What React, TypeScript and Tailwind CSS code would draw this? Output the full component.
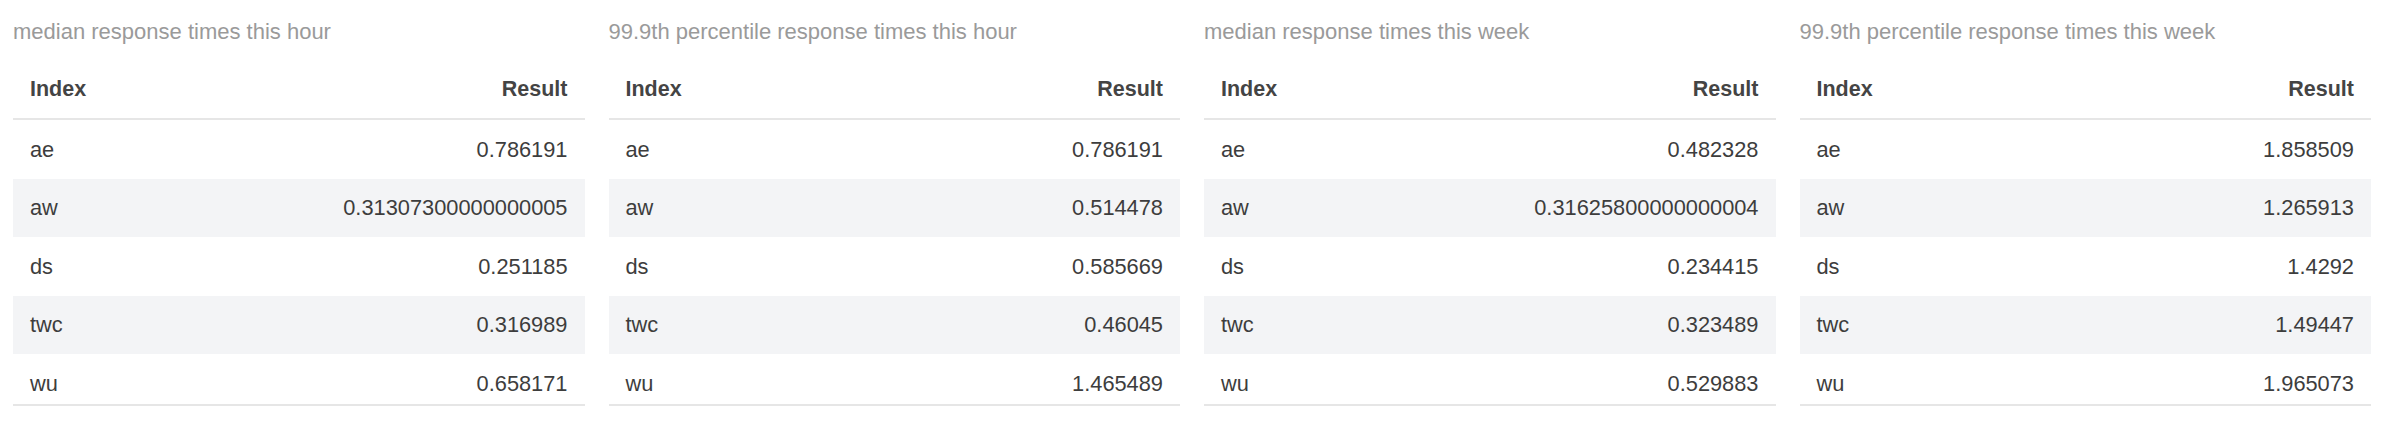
import React from "react";

type Row = [string, string];
type Table = { title: string; rows: Row[] };

const tables: Table[] = [
  {
    title: "median response times this hour",
    rows: [
      ["ae", "0.786191"],
      ["aw", "0.31307300000000005"],
      ["ds", "0.251185"],
      ["twc", "0.316989"],
      ["wu", "0.658171"],
    ],
  },
  {
    title: "99.9th percentile response times this hour",
    rows: [
      ["ae", "0.786191"],
      ["aw", "0.514478"],
      ["ds", "0.585669"],
      ["twc", "0.46045"],
      ["wu", "1.465489"],
    ],
  },
  {
    title: "median response times this week",
    rows: [
      ["ae", "0.482328"],
      ["aw", "0.31625800000000004"],
      ["ds", "0.234415"],
      ["twc", "0.323489"],
      ["wu", "0.529883"],
    ],
  },
  {
    title: "99.9th percentile response times this week",
    rows: [
      ["ae", "1.858509"],
      ["aw", "1.265913"],
      ["ds", "1.4292"],
      ["twc", "1.49447"],
      ["wu", "1.965073"],
    ],
  },
];

function ResultTable({ t }: { t: Table }) {
  return (
    <div className="flex flex-col">
      <div className="h-[60px] flex items-center text-[22px] text-[#9a9a9a] leading-none pt-[3px]">
        {t.title}
      </div>
      <div className="h-[60px] flex items-center justify-between px-[17px] pt-[1px] text-[21.5px] font-bold text-[#444] border-b-2 border-[#e6e6e6]">
        <span>Index</span>
        <span>Result</span>
      </div>
      {t.rows.map((r, i) => (
        <div
          key={r[0]}
          className={
            i === 4
              ? "h-[52px] flex items-start pt-[18px] justify-between px-[17px] text-[21.8px] leading-[24px] text-[#3d3d3d] border-b-2 border-[#e6e6e6]"
              : i % 2 === 1
              ? "h-[58.5px] flex items-center justify-between px-[17px] pt-[1px] text-[21.8px] leading-[24px] text-[#3d3d3d] bg-[#f3f4f6]"
              : "h-[58.5px] flex items-center justify-between px-[17px] pt-[1px] text-[21.8px] leading-[24px] text-[#3d3d3d]"
          }
        >
          <span>{r[0]}</span>
          <span>{r[1]}</span>
        </div>
      ))}
    </div>
  );
}

export default function App() {
  return (
    <div
      className="w-[2400px] h-[434px] bg-white pl-[13px] pr-[29px]"
      style={{ fontFamily: '"Liberation Sans", Arial, sans-serif' }}
    >
      <div className="grid grid-cols-4 gap-x-[24px]">
        {tables.map((t) => (
          <ResultTable key={t.title} t={t} />
        ))}
      </div>
    </div>
  );
}
